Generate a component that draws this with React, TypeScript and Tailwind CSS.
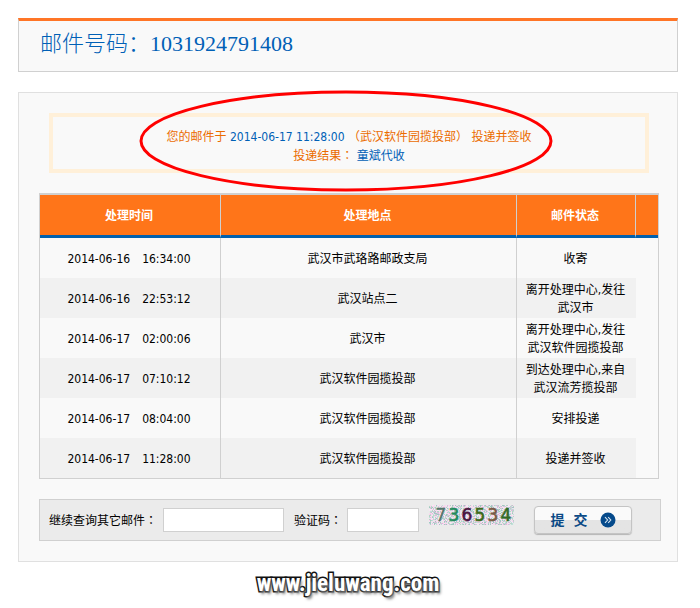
import { useMemo } from 'react';

const rows = [
  { date: '2014-06-16', time: '16:34:00', place: '武汉市武珞路邮政支局', status: '收寄' },
  { date: '2014-06-16', time: '22:53:12', place: '武汉站点二', status: '离开处理中心,发往武汉市' },
  { date: '2014-06-17', time: '02:00:06', place: '武汉市', status: '离开处理中心,发往武汉软件园揽投部' },
  { date: '2014-06-17', time: '07:10:12', place: '武汉软件园揽投部', status: '到达处理中心,来自武汉流芳揽投部' },
  { date: '2014-06-17', time: '08:04:00', place: '武汉软件园揽投部', status: '安排投递' },
  { date: '2014-06-17', time: '11:28:00', place: '武汉软件园揽投部', status: '投递并签收' },
];

const captchaDigits = [
  { char: '7', color: '#55756a' },
  { char: '3', color: '#1f8a5c' },
  { char: '6', color: '#4a1440' },
  { char: '5', color: '#3f6a1c' },
  { char: '3', color: '#7a5a44' },
  { char: '4', color: '#2f6a26' },
];

const noiseColors = ['#fbd3ee', '#f3dcee', '#bfe0da', '#a3c6c2', '#e6ece8', '#d9c0da', '#b4d6c6', '#f8e6f4'];

// full-width punctuation that sits in the middle of its box
function Punct({ children }: { children: string }) {
  return <span className="font-['Noto_Sans_CJK_TC',sans-serif]">{children}</span>;
}

function Captcha() {
  const cells = useMemo(() => {
    const list: { x: number; y: number; color: string }[] = [];
    let seed = 73653;
    for (let y = 0; y < 20; y++) {
      for (let x = 0; x < 85; x++) {
        seed = (seed * 16807) % 2147483647;
        list.push({ x, y, color: noiseColors[Math.floor((seed / 2147483647) * noiseColors.length)] });
      }
    }
    return list;
  }, []);

  return (
    <svg width="85" height="20" viewBox="0 0 85 20" role="img" aria-label="736534" shapeRendering="crispEdges">
      {cells.map((c) => (
        <rect key={`${c.x}-${c.y}`} x={c.x} y={c.y} width="1" height="1" fill={c.color} />
      ))}
      {captchaDigits.map((d, i) => (
        <text
          key={i}
          x={12 + i * 13}
          y="16"
          textAnchor="middle"
          fontSize="17"
          fill={d.color}
          stroke={d.color}
          strokeWidth={i === 0 ? 0.3 : 0.6}
          fontFamily="'DejaVu Sans', sans-serif"
        >
          {d.char}
        </text>
      ))}
    </svg>
  );
}

function Notice() {
  return (
    <div className="relative ml-2.5 mr-3 h-[60px] border-4 border-[#fff0d9] pt-2.5 text-center leading-[18px] text-[#eb6c00]">
      <p>
        您的邮件于 <span className="text-[#0060b6]">2014-06-17 11:28:00</span> <Punct>（</Punct>武汉软件园揽投部<Punct>）</Punct> 投递并签收
      </p>
      <p>
        投递结果<Punct>：</Punct> <span className="text-[#0060b6]">童斌代收</span>
      </p>
      <svg
        className="pointer-events-none absolute -top-[27px] left-[calc(50%-210px)]"
        width="414"
        height="102"
        viewBox="0 0 414 102"
        fill="none"
        aria-hidden="true"
      >
        <ellipse cx="207" cy="51" rx="205" ry="49" stroke="#ff0000" strokeWidth="3" />
      </svg>
    </div>
  );
}

function TrackTable() {
  return (
    <div className="mr-0.5 mt-5 border border-t-2 border-[#d0d0d0]">
      <table className="w-full table-fixed border-separate border-spacing-0 text-center leading-[18px]">
        <colgroup>
          <col className="w-[181px]" />
          <col />
          <col className="w-[119px]" />
          <col className="w-[22px]" />
        </colgroup>
        <thead>
          <tr className="h-[43px] bg-[#ff7519] text-white">
            <th className="border-b-[3px] border-r border-b-[#0060ae] border-r-[#d0d0d0] pb-0 pl-0 pr-0.5 pt-0.5">处理时间</th>
            <th className="border-b-[3px] border-r border-b-[#0060ae] border-r-[#d0d0d0] pb-0 pl-0 pr-0.5 pt-0.5">处理地点</th>
            <th className="border-b-[3px] border-r border-b-[#0060ae] border-r-[#d0d0d0] pb-0 pl-0 pr-0.5 pt-0.5">邮件状态</th>
            <td className="border-b-[3px] border-[#0060ae] p-0"></td>
          </tr>
        </thead>
        <tbody>
          {rows.map((row, i) => {
            const bg = i % 2 ? 'bg-[#f1f1f1]' : '';
            return (
              <tr key={i} className="h-10">
                <td className={`border-r border-[#d0d0d0] pb-0 pl-0 pr-0.5 pt-0.5 ${bg}`}>
                  <span className="mr-3">{row.date}</span>
                  <span>{row.time}</span>
                </td>
                <td className={`border-r border-[#d0d0d0] pb-0 pl-0 pr-0.5 pt-0.5 ${bg}`}>{row.place}</td>
                <td className={`pb-0 pl-1.5 pr-2 pt-0.5 ${bg}`}>{row.status}</td>
                <td className="p-0"></td>
              </tr>
            );
          })}
        </tbody>
      </table>
    </div>
  );
}

function QueryForm() {
  return (
    <form
      className="mt-5 flex h-[42px] items-center border border-[#d0d0d0] bg-[#ebebeb] pl-[9px]"
      onSubmit={(e) => e.preventDefault()}
    >
      <label htmlFor="mailNum" className="whitespace-nowrap">
        继续查询其它邮件<Punct>：</Punct>
      </label>
      <input id="mailNum" type="text" className="ml-1.5 h-6 w-[121px] border border-[#d0d0d0] bg-white px-1" />
      <label htmlFor="checkCode" className="ml-2.5 whitespace-nowrap">
        验证码<Punct>：</Punct>
      </label>
      <input id="checkCode" type="text" className="ml-[5px] h-6 w-[72px] border border-[#d0d0d0] bg-white px-1" />
      <div className="mb-2.5 ml-2.5 shrink-0">
        <Captcha />
      </div>
      <button
        type="submit"
        className="ml-5 flex h-7 w-[98px] shrink-0 items-center justify-center rounded border border-[#c4c4c4] bg-linear-to-b from-[#fafafa] from-50% to-[#e4e4e4] to-50% text-sm font-bold text-[#0b4a86] shadow-[0_1px_1px_#b5b5b5]"
      >
        <span className="mr-[9px]">提</span>
        <span className="mr-3">交</span>
        <svg width="16" height="16" viewBox="0 0 16 16" fill="none" aria-hidden="true">
          <circle cx="8" cy="8" r="7.5" fill="#054a8b" />
          <path d="M5 5.2l2.6 2.8L5 10.8M8.2 5.2L10.8 8l-2.6 2.8" stroke="#d8e6f2" strokeWidth="1.1" />
        </svg>
      </button>
    </form>
  );
}

export default function App() {
  return (
    <div className="bg-white pb-1 pl-[18px] pr-[22px] pt-[18px] font-['DejaVu_Sans_Condensed','Noto_Sans_CJK_SC',sans-serif] text-xs text-black">
      <header className="h-[54px] border border-t-[3px] border-[#d0d0d0] border-t-[#ff7526] bg-[#f9f9f9] pl-[21px]">
        <h1 className="font-['Liberation_Serif','Noto_Sans_CJK_SC',serif] text-[22px] font-light leading-[46px] text-[#0060b6]">
          邮件号码：1031924791408
        </h1>
      </header>

      <main className="mt-5 border border-[#e0e0e0] bg-[#f9f9f9] pb-5 pl-5 pr-4 pt-5">
        <Notice />
        <TrackTable />
        <QueryForm />
      </main>

      <footer className="pt-1.5 text-center">
        <a
          href="#"
          className="font-['Roboto_Condensed','Roboto',sans-serif] text-[23px] leading-8 font-bold text-white [-webkit-text-stroke:3px_#111] [paint-order:stroke_fill] [text-shadow:2px_3px_3px_#777]"
        >
          www.jieluwang.com
        </a>
      </footer>
    </div>
  );
}
